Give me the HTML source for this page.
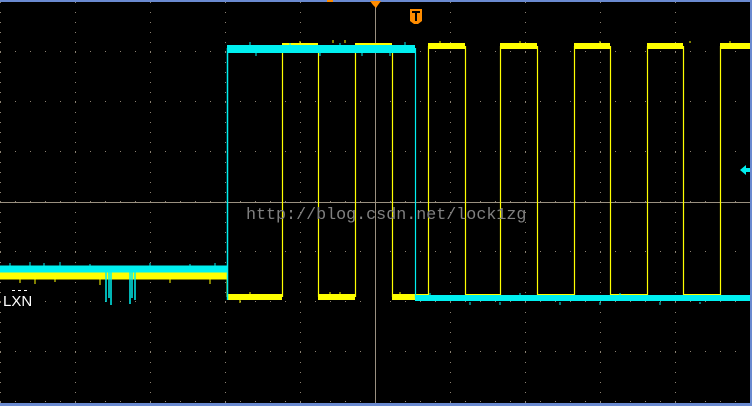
<!DOCTYPE html>
<html><head><meta charset="utf-8"><style>
html,body{margin:0;padding:0;background:#000;width:752px;height:406px;overflow:hidden}
svg{display:block}
</style></head><body>
<svg width="752" height="406" viewBox="0 0 752 406" xmlns="http://www.w3.org/2000/svg">
<defs>
<pattern id="hd" x="0" y="0" width="15" height="50" patternUnits="userSpaceOnUse">
<rect x="0" y="1" width="1" height="1" fill="#8a8070"/>
</pattern>
<pattern id="vd" x="0" y="0" width="75" height="10" patternUnits="userSpaceOnUse">
<rect x="0" y="2" width="1" height="1" fill="#8a8070"/>
</pattern>
</defs>
<rect width="752" height="406" fill="#000"/>
<rect x="0" y="0" width="750" height="404" fill="url(#hd)"/>
<rect x="0" y="0" width="750" height="404" fill="url(#vd)"/>
<line x1="0" y1="202.5" x2="750" y2="202.5" stroke="#9a9080" stroke-width="1"/>
<line x1="375.5" y1="4" x2="375.5" y2="404" stroke="#9a9080" stroke-width="1"/>
<rect x="0" y="0" width="752" height="2" fill="#6a8ad0"/>
<rect x="0" y="403" width="752" height="3" fill="#6a8ad0"/>
<rect x="750" y="0" width="2" height="406" fill="#6a8ad0"/>
<!-- yellow trace -->
<g fill="none" stroke="#ffff00">
<path stroke-width="7" d="M0 276 H227"/>
<path stroke-width="1" d="M227 276 V297"/>
<path stroke-width="6" d="M227 297 H282 M318 297 H355 M392 297 H428 M465 297 H500 M537 297 H574 M610 297 H647 M683 297 H720"/>
<path stroke-width="6" d="M282 46 H318 M355 46 H392 M428 46 H465 M500 46 H537 M574 46 H610 M647 46 H683 M720 46 H750"/>
<path stroke-width="1.2" d="M282.5 46 V297 M318.5 46 V297 M355.5 46 V297 M392.5 46 V297 M428.5 46 V297 M465.5 46 V297 M500.5 46 V297 M537.5 46 V297 M574.5 46 V297 M610.5 46 V297 M647.5 46 V297 M683.5 46 V297 M720.5 46 V297"/>
</g>
<g stroke="#ffff00" stroke-width="1">
<path d="M20 279 V283 M35 279 V284 M55 279 V282 M100 279 V285 M170 279 V283 M210 279 V284 M240 300 V303 M300 41 V43 M333 40 V43 M345 40 V43 M440 41 V43 M520 41 V43 M600 41 V43 M690 41 V43 M730 41 V43 M250 292 V294 M330 292 V294 M400 292 V294 M340 292 V294"/>
</g>
<!-- cyan trace -->
<g fill="none" stroke="#00f0f0">
<path stroke-width="7" d="M0 269 H227"/>
<path stroke-width="1.5" d="M106 270 V302 M111 270 V305 M130 270 V304 M135 270 V300 M109 270 V298 M132 270 V298"/>
<path stroke-width="1.5" d="M227.5 48 V300"/>
<path stroke-width="8" d="M227 49 H415"/>
<path stroke-width="1.2" d="M415.5 48 V298"/>
<path stroke-width="6" d="M415 298 H750"/>
</g>
<g stroke="#00f0f0" stroke-width="1">
<path d="M10 263 V266 M30 262 V266 M44 263 V266 M60 262 V266 M90 264 V266 M150 263 V266 M190 264 V266 M215 263 V266 M250 42 V46 M256 53 V56 M290 43 V46 M320 52 V56 M340 43 V46 M362 53 V56 M390 53 V56 M405 42 V46 M470 302 V305 M500 302 V305 M560 302 V305 M600 302 V305 M660 302 V305 M700 302 V304 M430 293 V295 M520 293 V295 M620 293 V295"/>
</g>
<!-- markers -->
<rect x="327" y="0" width="6" height="2" fill="#ff8c00"/>
<path d="M370 1 H381 L378 5 L376 8 L373 5 Z" fill="#ff8c00"/>
<path d="M410 9 H422 V21 L418 24 H414 L410 21 Z" fill="#ff8c00"/>
<path d="M412 11 H420 V13 H417 V21 H415 V13 H412 Z" fill="#000"/>
<path d="M740 170 L746 165 V168 H750 V172 H746 V175 Z" fill="#00f0f0"/>
<!-- labels -->
<text x="3" y="306" font-family="Liberation Sans, sans-serif" font-size="15" fill="#ffffff">LXN</text>
<line x1="12" y1="290.5" x2="30" y2="290.5" stroke="#fff" stroke-width="1" stroke-dasharray="3 3"/>
<text x="246" y="219" font-family="Liberation Mono, monospace" font-size="16.7" fill="#808080">http://blog.csdn.net/lock1zg</text>
</svg>
</body></html>
